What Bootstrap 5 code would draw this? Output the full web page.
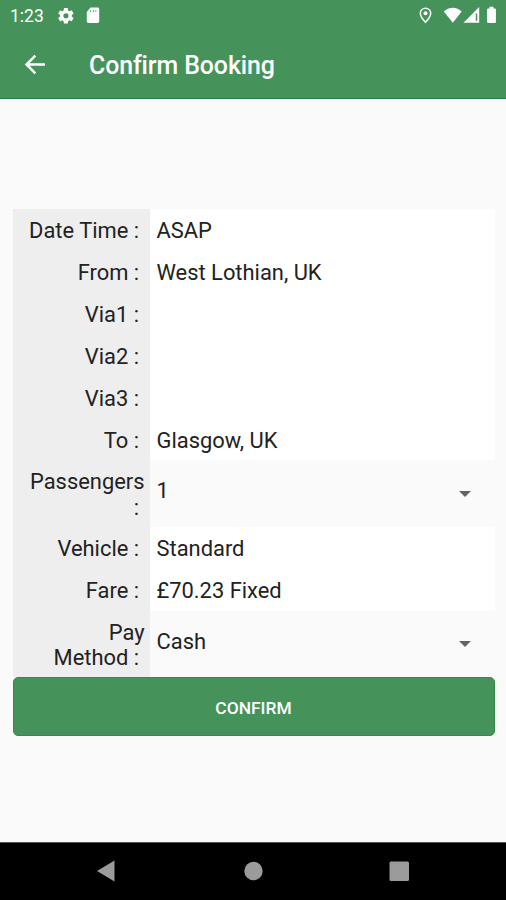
<!DOCTYPE html>
<html lang="en">
<head>
<meta charset="utf-8">
<meta name="viewport" content="width=device-width, initial-scale=1">
<title>Confirm Booking</title>
<link href="https://cdn.jsdelivr.net/npm/bootstrap@5.3.0/dist/css/bootstrap.min.css" rel="stylesheet">
<style>
  body { font-family: Roboto, "Liberation Sans", sans-serif; background: #fafafa; color: #222; }
  .app-head { height: 98.5px; background: #45935a; border-bottom: 1px solid #258044; }
  .status-row { height: 32px; padding: 0 8px 0 10px; font-size: 17.5px; }
  .title-row { height: 66px; padding-left: 23px; gap: 41px; }
  .title-text { font-size: 24.9px; font-weight: 500; line-height: 1; letter-spacing: -.1px; padding-top: 2px; }
  .booking { padding: 110.6px 11.5px 0 12.5px; font-size: 21.9px; line-height: 25.6px; }
  .field-name { width: 137.5px; padding: 9px 5.5px 7.300px 8px; background: #eee; letter-spacing: 0; }
  .field-value { padding: 9px 27px 7.300px 6.5px; background: #fff; }
  .tall .field-value { background: #fafafa; padding-bottom: 14px; }
  .tall .field-name { padding-bottom: 6.3px; }
  .caret { margin-top: 5px; }
  .btn-confirm { height: 59px; background: #45935a; color: #fff; border: 1px solid #35894e; border-radius: 5px; font-size: 17.4px; font-weight: 500; padding-top: 8px; }
  .btn-confirm:hover { background: #3b8550; color: #fff; }
  .nav-keys { height: 58px; background: #000; border-top: 1px solid #555; }
</style>
</head>
<body>
<div class="d-flex flex-column vh-100 overflow-hidden">
  <header class="app-head text-white flex-shrink-0">
    <div class="status-row d-flex align-items-center">
      <span>1:23</span>
      <svg width="46" height="22" viewBox="0 0 46 22" fill="#fff" style="margin-left:12px">
        <g transform="translate(.6 1.4) scale(.78)"><path d="M19.4 13c0-.3.1-.6.1-1s0-.7-.1-1l2.100-1.600c.2-.2.3-.4.100-.6l-2-3.500c-.1-.2-.4-.3-.6-.2l-2.500 1c-.5-.4-1.100-.7-1.700-1l-.4-2.600c0-.2-.2-.4-.5-.4h-4c-.2 0-.5.2-.5.4L9 5.100c-.6.300-1.200.6-1.700 1l-2.500-1c-.2-.1-.5 0-.6.200l-2 3.500c-.1.200-.1.500.1.600L4.500 11c0 .3-.1.7-.1 1s0 .7.100 1l-2.200 1.600c-.2.200-.2.400-.1.600l2 3.500c.1.200.4.300.6.200l2.500-1c.5.400 1.100.7 1.700 1l.4 2.600c0 .2.200.4.500.4h4c.2 0 .5-.2.500-.4l.4-2.600c.6-.3 1.200-.6 1.700-1l2.500 1c.2.100.5 0 .6-.2l2-3.500c.1-.2.100-.5-.1-.6zM12 15.300a3.300 3.300 0 1 1 0-6.600 3.300 3.300 0 0 1 0 6.600z" fill-rule="evenodd"/></g>
        <path d="M34.500 2.500h7.300q1.400 0 1.400 1.400v12.700q0 1.400-1.400 1.400h-9.600q-1.400 0-1.400-1.400V7zM34.300 5v2.200h.8V5zm2.600 0v2.200h.8V5zm2.600 0v2.200h.8V5z" fill-rule="evenodd"/>
      </svg>
      <svg class="ms-auto" width="80" height="22" viewBox="0 0 80 22" fill="#fff">
        <path d="M7.500 3.300c-3 0-5.200 2.200-5.200 5 0 3.600 5.200 9 5.200 9s5.200-5.400 5.200-9c0-2.800-2.200-5-5.200-5z" fill="none" stroke="#fff" stroke-width="1.500"/>
        <circle cx="7.500" cy="8.200" r="2"/>
        <path d="M25.800 6.600C30.500 1.400 39 1.400 43.700 6.600L34.800 17.800z"/>
        <path d="M61.200 2v15.700H45.500z"/>
        <path d="M58.500 8.500v7.300" stroke="#45935a" stroke-width="1.500"/>
        <path d="M71.500 1.800h4v1.700h1.400q1 0 1 1V17q0 1-1 1h-6.800q-1 0-1-1V4.500q0-1 1-1h1.400z"/>
      </svg>
    </div>
    <div class="title-row d-flex align-items-center">
      <svg width="25" height="24" viewBox="0 0 25 24" fill="none" stroke="#fff" stroke-width="2.500"><path d="M22 11.500H4M12.300 2.700 3.500 11.500l8.800 8.800"/></svg>
      <h1 class="title-text mb-0">Confirm Booking</h1>
    </div>
  </header>

  <main class="booking flex-grow-1">
    <div class="d-flex"><div class="field-name flex-shrink-0 text-end">Date Time :&nbsp;</div><div class="field-value flex-grow-1">ASAP</div></div>
    <div class="d-flex"><div class="field-name flex-shrink-0 text-end">From :&nbsp;</div><div class="field-value flex-grow-1">West Lothian, UK</div></div>
    <div class="d-flex"><div class="field-name flex-shrink-0 text-end">Via1 :&nbsp;</div><div class="field-value flex-grow-1"></div></div>
    <div class="d-flex"><div class="field-name flex-shrink-0 text-end">Via2 :&nbsp;</div><div class="field-value flex-grow-1"></div></div>
    <div class="d-flex"><div class="field-name flex-shrink-0 text-end">Via3 :&nbsp;</div><div class="field-value flex-grow-1"></div></div>
    <div class="d-flex"><div class="field-name flex-shrink-0 text-end">To :&nbsp;</div><div class="field-value flex-grow-1">Glasgow, UK</div></div>
    <div class="d-flex tall"><div class="field-name flex-shrink-0 text-end">Passengers :&nbsp;</div><div class="field-value flex-grow-1 d-flex align-items-center justify-content-between"><span>1</span><svg class="caret" width="6" height="6" overflow="visible"><path d="M-3 0h12L3 6z" fill="#646464"/></svg></div></div>
    <div class="d-flex"><div class="field-name flex-shrink-0 text-end">Vehicle :&nbsp;</div><div class="field-value flex-grow-1">Standard</div></div>
    <div class="d-flex"><div class="field-name flex-shrink-0 text-end">Fare :&nbsp;</div><div class="field-value flex-grow-1">£70.23 Fixed</div></div>
    <div class="d-flex tall"><div class="field-name flex-shrink-0 text-end">Pay Method&nbsp;:&nbsp;</div><div class="field-value flex-grow-1 d-flex align-items-center justify-content-between"><span>Cash</span><svg class="caret" width="6" height="6" overflow="visible"><path d="M-3 0h12L3 6z" fill="#646464"/></svg></div></div>
    <button type="button" class="btn btn-confirm w-100 d-block">CONFIRM</button>
  </main>

  <nav class="nav-keys flex-shrink-0">
    <svg class="d-block" width="506" height="57" viewBox="0 0 506 57" fill="#9b9b9b">
      <path d="M97 28 114.500 17.500v21z"/>
      <circle cx="253.500" cy="28" r="9.200"/>
      <rect x="389.500" y="18.500" width="19.500" height="19.500" rx="1.500"/>
    </svg>
  </nav>
</div>
<script src="https://cdn.jsdelivr.net/npm/bootstrap@5.3.0/dist/js/bootstrap.bundle.min.js"></script>
</body>
</html>
